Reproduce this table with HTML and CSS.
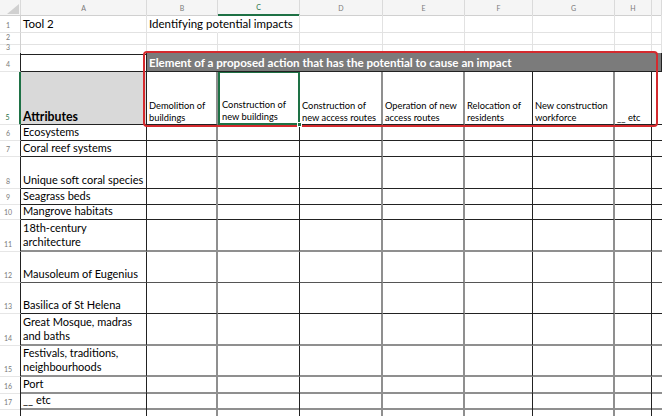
FILE: index.html
```html
<!DOCTYPE html>
<html>
<head>
<meta charset="utf-8">
<link rel="stylesheet" href="styles.css">
</head>
<body>
<div class="sheet">
  <div class="row h-hdr hdr">
    <div class="c corner"><svg width="12" height="10" viewBox="0 0 12 10"><polygon points="12,0 12,10 0,10" fill="#d0d0d0"/></svg></div>
    <div class="c ch">A</div><div class="c ch">B</div><div class="c ch sel">C</div><div class="c ch">D</div><div class="c ch">E</div><div class="c ch">F</div><div class="c ch">G</div><div class="c ch">H</div><div class="c ch"></div>
  </div>
  <div class="row h-r1 top">
    <div class="c rh">1</div><div class="c big">Tool 2</div><div class="c big spill">Identifying potential impacts</div><div class="c"></div><div class="c"></div><div class="c"></div><div class="c"></div><div class="c"></div><div class="c"></div><div class="c"></div>
  </div>
  <div class="row h-r2 top">
    <div class="c rh">2</div><div class="c"></div><div class="c"></div><div class="c"></div><div class="c"></div><div class="c"></div><div class="c"></div><div class="c"></div><div class="c"></div><div class="c"></div>
  </div>
  <div class="row h-r3 top">
    <div class="c rh">3</div><div class="c dark-b"></div><div class="c"></div><div class="c"></div><div class="c"></div><div class="c"></div><div class="c"></div><div class="c"></div><div class="c"></div><div class="c"></div>
  </div>
  <div class="row h-r4">
    <div class="c rh rh-d">4</div><div class="c d"></div><div class="c d band">Element of a proposed action that has the potential to cause an impact</div>
  </div>
  <div class="row h-r5 data heads">
    <div class="c rh rh-sel">5</div>
    <div class="c d attr">Attributes</div>
    <div class="c d">Demolition of buildings</div>
    <div class="c d cur">Construction of new buildings</div>
    <div class="c d">Construction of new access routes</div>
    <div class="c d">Operation of new access routes</div>
    <div class="c d">Relocation of residents</div>
    <div class="c d">New construction workforce</div>
    <div class="c d">__ etc</div>
    <div class="c d"></div>
  </div>
  <div class="row h-16 data">
    <div class="c rh rh-d">6</div><div class="c d">Ecosystems</div><div class="c d"></div><div class="c d"></div><div class="c d"></div><div class="c d"></div><div class="c d"></div><div class="c d"></div><div class="c d"></div><div class="c d"></div>
  </div>
  <div class="row h-16 data">
    <div class="c rh rh-d">7</div><div class="c d">Coral reef systems</div><div class="c d"></div><div class="c d"></div><div class="c d"></div><div class="c d"></div><div class="c d"></div><div class="c d"></div><div class="c d"></div><div class="c d"></div>
  </div>
  <div class="row h-32 data">
    <div class="c rh rh-d">8</div><div class="c d">Unique soft coral species</div><div class="c d"></div><div class="c d"></div><div class="c d"></div><div class="c d"></div><div class="c d"></div><div class="c d"></div><div class="c d"></div><div class="c d"></div>
  </div>
  <div class="row h-15 data">
    <div class="c rh rh-d">9</div><div class="c d">Seagrass beds</div><div class="c d"></div><div class="c d"></div><div class="c d"></div><div class="c d"></div><div class="c d"></div><div class="c d"></div><div class="c d"></div><div class="c d"></div>
  </div>
  <div class="row h-16 data">
    <div class="c rh rh-d">10</div><div class="c d">Mangrove habitats</div><div class="c d"></div><div class="c d"></div><div class="c d"></div><div class="c d"></div><div class="c d"></div><div class="c d"></div><div class="c d"></div><div class="c d"></div>
  </div>
  <div class="row h-32 data soft">
    <div class="c rh rh-d">11</div><div class="c d">18th-century<br>architecture</div><div class="c d"></div><div class="c d"></div><div class="c d"></div><div class="c d"></div><div class="c d"></div><div class="c d"></div><div class="c d"></div><div class="c d"></div>
  </div>
  <div class="row h-31 data mid">
    <div class="c rh rh-d">12</div><div class="c d">Mausoleum of Eugenius</div><div class="c d"></div><div class="c d"></div><div class="c d"></div><div class="c d"></div><div class="c d"></div><div class="c d"></div><div class="c d"></div><div class="c d"></div>
  </div>
  <div class="row h-31 data">
    <div class="c rh rh-d">13</div><div class="c d">Basilica of St Helena</div><div class="c d"></div><div class="c d"></div><div class="c d"></div><div class="c d"></div><div class="c d"></div><div class="c d"></div><div class="c d"></div><div class="c d"></div>
  </div>
  <div class="row h-32 data soft">
    <div class="c rh rh-d">14</div><div class="c d">Great Mosque, madras<br>and baths</div><div class="c d"></div><div class="c d"></div><div class="c d"></div><div class="c d"></div><div class="c d"></div><div class="c d"></div><div class="c d"></div><div class="c d"></div>
  </div>
  <div class="row h-31 data soft">
    <div class="c rh rh-d">15</div><div class="c d">Festivals, traditions,<br>neighbourhoods</div><div class="c d"></div><div class="c d"></div><div class="c d"></div><div class="c d"></div><div class="c d"></div><div class="c d"></div><div class="c d"></div><div class="c d"></div>
  </div>
  <div class="row h-16 data soft">
    <div class="c rh rh-d">16</div><div class="c d">Port</div><div class="c d"></div><div class="c d"></div><div class="c d"></div><div class="c d"></div><div class="c d"></div><div class="c d"></div><div class="c d"></div><div class="c d"></div>
  </div>
  <div class="row h-15 data soft">
    <div class="c rh rh-d">17</div><div class="c d">__ etc</div><div class="c d"></div><div class="c d"></div><div class="c d"></div><div class="c d"></div><div class="c d"></div><div class="c d"></div><div class="c d"></div><div class="c d"></div>
  </div>
  <div class="row h-16 data soft">
    <div class="c rh rh-d"></div><div class="c d"></div><div class="c d"></div><div class="c d"></div><div class="c d"></div><div class="c d"></div><div class="c d"></div><div class="c d"></div><div class="c d"></div><div class="c d"></div>
  </div>

  <div class="callout"></div>
  <div class="handle"></div>
</div>
</body>
</html>
```

FILE: styles.css
```css
* { box-sizing: border-box; }
html, body { margin: 0; padding: 0; background: #fff; }
body { font-family: Lato, "Liberation Sans", sans-serif; color: #000; }

.sheet { position: relative; width: 662px; height: 416px; overflow: hidden; }

.row {
  display: grid;
  grid-template-columns: 21px 126px 71px 82px 83px 82px 68px 82px 37px 10px;
}
.h-hdr { height: 15px; }
.h-r1 { height: 18px; }
.h-r2 { height: 10px; }
.h-r3 { height: 10px; }
.h-r4 { height: 19px; }
.h-r5 { height: 53px; }
.h-15 { height: 15px; }
.h-16 { height: 16px; }
.h-31 { height: 31px; }
.h-32 { height: 32px; }

.c {
  min-width: 0;
  display: flex;
  align-items: flex-end;
  padding: 0 2px 1px;
  border-right: 1px solid #e2e2e2;
  border-bottom: 1px solid #e2e2e2;
  font-size: 11px;
  line-height: 14px;
  white-space: nowrap;
}

/* header row */
.hdr .c { background: #f5f5f5; border-bottom-color: #d0d0d0; border-right-color: #dadada; }
.corner { justify-content: flex-end; align-items: flex-end; padding: 0 1px 1px 0; }
.ch {
  justify-content: center;
  align-items: center;
  font-size: 7px;
  color: #7a7a7a;
  padding: 0;
}
.ch.sel { color: #1e7145; border-bottom: 2px solid #1e7145; }

/* row headers */
.rh {
  justify-content: center;
  padding: 0 4px 2px 0;
  font-size: 7px;
  line-height: 9px;
  color: #7a7a7a;
  border-right-color: #d0d0d0;
  border-bottom-color: #e6e6e6;
}
.rh-d { border-right: 1px solid #222; }
.rh-sel { color: #1e7145; border-right: 2px solid #1e7145; }

.big { font-size: 11.5px; line-height: 15px; padding-bottom: 1px; }
.spill { border-right-color: transparent; }
.dark-b { border-bottom: 1px solid #222; }

/* row 4 merged band */
.band {
  grid-column: span 8;
  background: #7b7b7b;
  color: #fff;
  font-weight: 700;
  font-size: 11.6px;
  align-items: center;
  padding: 1px 2px 0;
}

/* data area */
.d { border-right: 1px solid #222; border-bottom: 1px solid #222; }
.data > :nth-child(3),
.data > :nth-child(5),
.data > :nth-child(6),
.data > :nth-child(8) { border-right: 2px solid #8f8f8f; }
.soft > .d { border-bottom: 2px solid #8f8f8f; }
.mid > .d { border-bottom: 1px solid #555; }
.data > :nth-child(10) { border-right: none; }

/* column headings row 5 */
.heads .d {
  white-space: normal;
  font-size: 9.3px;
  line-height: 12px;
  padding-bottom: 0;
}
.heads .attr {
  background: #d9d9d9;
  font-weight: 700;
  font-size: 12.3px;
  line-height: 15px;
}
.heads .cur { border: 2px solid #1e7145; border-top-width: 1px; }

.callout {
  position: absolute;
  left: 143px;
  top: 51px;
  width: 515px;
  height: 76px;
  border: 2px solid #d42a2e;
  border-radius: 4px;
  pointer-events: none;
}
.handle {
  position: absolute;
  left: 297px;
  top: 122px;
  width: 5px;
  height: 5px;
  background: #1e7145;
  border: 1px solid #fff;
}
```
